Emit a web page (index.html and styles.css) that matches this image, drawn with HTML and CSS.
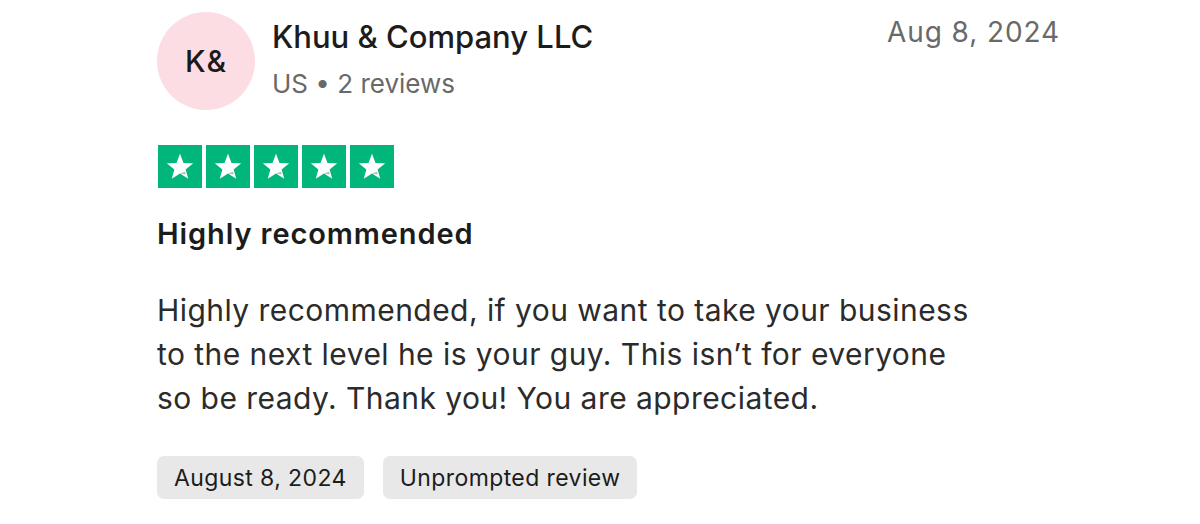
FILE: index.html
```html
<!DOCTYPE html>
<html lang="en">
<head>
<meta charset="utf-8">
<link rel="stylesheet" href="styles.css">
</head>
<body>
<article class="review">
  <header class="head">
    <div class="avatar">K&amp;</div>
    <div class="who">
      <div class="name">Khuu &amp; Company LLC</div>
      <div class="meta">US • 2 reviews</div>
    </div>
    <time class="date">Aug 8, 2024</time>
  </header>
  <div class="stars">
    <span class="star"><svg viewBox="0 0 24 24"><path d="M12 3.2l2.35 6.05 6.45.3-5.05 4.05 1.75 6.25L12 16.3l-5.5 3.55 1.75-6.25L3.2 9.55l6.45-.3z" fill="#fff"/><path d="M15.3 15.1l.5 1.9-3.8-.7z" fill="#005128" opacity=".35"/></svg></span>
    <span class="star"><svg viewBox="0 0 24 24"><path d="M12 3.2l2.35 6.05 6.45.3-5.05 4.05 1.75 6.25L12 16.3l-5.5 3.55 1.75-6.25L3.2 9.55l6.45-.3z" fill="#fff"/><path d="M15.3 15.1l.5 1.9-3.8-.7z" fill="#005128" opacity=".35"/></svg></span>
    <span class="star"><svg viewBox="0 0 24 24"><path d="M12 3.2l2.35 6.05 6.45.3-5.05 4.05 1.75 6.25L12 16.3l-5.5 3.55 1.75-6.25L3.2 9.55l6.45-.3z" fill="#fff"/><path d="M15.3 15.1l.5 1.9-3.8-.7z" fill="#005128" opacity=".35"/></svg></span>
    <span class="star"><svg viewBox="0 0 24 24"><path d="M12 3.2l2.35 6.05 6.45.3-5.05 4.05 1.75 6.25L12 16.3l-5.5 3.55 1.75-6.25L3.2 9.55l6.45-.3z" fill="#fff"/><path d="M15.3 15.1l.5 1.9-3.8-.7z" fill="#005128" opacity=".35"/></svg></span>
    <span class="star"><svg viewBox="0 0 24 24"><path d="M12 3.2l2.35 6.05 6.45.3-5.05 4.05 1.75 6.25L12 16.3l-5.5 3.55 1.75-6.25L3.2 9.55l6.45-.3z" fill="#fff"/><path d="M15.3 15.1l.5 1.9-3.8-.7z" fill="#005128" opacity=".35"/></svg></span>
  </div>
  <h2 class="title">Highly recommended</h2>
  <p class="text">Highly recommended, if you want to take your business to the next level he is your guy. This isn’t for everyone so be ready. Thank you! You are appreciated.</p>
  <div class="tags">
    <span class="tag">August 8, 2024</span>
    <span class="tag">Unprompted review</span>
  </div>
</article>
</body>
</html>
```

FILE: styles.css
```css
html, body {
  margin: 0;
  padding: 0;
  background: #ffffff;
}
body {
  font-family: Inter, "Liberation Sans", Arial, sans-serif;
  color: #1c1c1c;
}
.review {
  width: 902px;
  padding: 12px 0 0 157px;
}
.head {
  display: flex;
  align-items: flex-start;
  height: 98px;
}
.avatar {
  width: 98px;
  height: 98px;
  border-radius: 50%;
  background: #fcdde4;
  display: flex;
  align-items: center;
  justify-content: center;
  font-size: 30px;
  font-weight: 500;
  letter-spacing: 1px;
  color: #1a1a1a;
  flex: none;
}
.who {
  margin-left: 17px;
  flex: 1;
  padding-top: 6px;
}
.name {
  font-size: 31px;
  font-weight: 500;
  line-height: 38px;
  color: #1c1c1c;
}
.meta {
  font-size: 26px;
  line-height: 34px;
  margin-top: 11px;
  color: #696969;
}
.date {
  font-size: 28px;
  line-height: 36px;
  letter-spacing: 0.9px;
  color: #696969;
  margin-top: 2px;
  margin-right: -1px;
}
.stars {
  display: flex;
  gap: 4px;
  margin-top: 35px;
  margin-left: 1px;
}
.star {
  width: 44px;
  height: 43px;
  background: #00b67a;
  display: flex;
  align-items: center;
  justify-content: center;
}
.star svg {
  width: 36px;
  height: 36px;
}
.title {
  margin: 26px 0 0;
  font-size: 29px;
  font-weight: 600;
  line-height: 40px;
  letter-spacing: 0.9px;
  color: #1c1c1c;
}
.text {
  margin: 34px 0 0;
  width: 818px;
  font-size: 30px;
  line-height: 44px;
  letter-spacing: 0.45px;
  color: #2b2b2b;
}
.tags {
  display: flex;
  gap: 19px;
  margin-top: 36px;
}
.tag {
  background: #e8e8e8;
  border-radius: 7px;
  height: 43px;
  padding: 0 17px;
  display: flex;
  align-items: center;
  font-size: 23px;
  letter-spacing: 0.4px;
  color: #1c1c1c;
}
```
